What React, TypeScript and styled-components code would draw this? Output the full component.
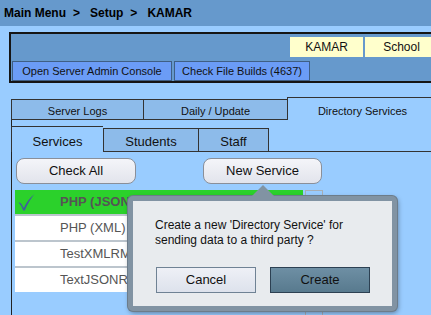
import styled, { createGlobalStyle } from "styled-components";

const GlobalStyle = createGlobalStyle`
  html, body {
    margin: 0;
    padding: 0;
    overflow: hidden;
  }
  body {
    background: #99ccff;
    font-family: "Liberation Sans", Arial, sans-serif;
    color: #111;
  }
`;

const Page = styled.div`
  position: relative;
  width: 431px;
  height: 315px;
  overflow: hidden;
`;

const Breadcrumb = styled.div`
  height: 26px;
  background: #6699cc;
  padding-left: 4px;
  display: flex;
  align-items: center;
  font-size: 12px;
  font-weight: bold;
  color: #000;
`;

const Crumb = styled.span`
  white-space: nowrap;
`;

const Separator = styled.span`
  margin: 0 10px 0 7px;
`;

const Toolbar = styled.div`
  margin: 6px 0 0 9px;
  width: 433px;
  box-sizing: border-box;
  background: #6699cc;
  border: 2px solid #151515;
  padding: 3px 2px 0 1px;
  display: flex;
  flex-direction: column;
  gap: 4px;
  height: 51px;
`;

const ToolRow = styled.div<{ $end?: boolean }>`
  display: flex;
  justify-content: ${(p) => (p.$end ? "flex-end" : "flex-start")};
  gap: 2px;
`;

const ContextTag = styled.div`
  width: 73px;
  height: 20px;
  background: #ffffcc;
  font-size: 12px;
  line-height: 21px;
  text-align: center;
`;

const ToolButton = styled.div<{ $w: number }>`
  width: ${(p) => p.$w}px;
  height: 20px;
  box-sizing: border-box;
  background: #6b9cf6;
  border: 1px solid #3f5f85;
  font-size: 11px;
  line-height: 19px;
  text-align: center;
  white-space: nowrap;
`;

const TopTabs = styled.div`
  margin: 14px 0 0 11px;
  display: flex;
  align-items: flex-end;
`;

const TopTab = styled.div<{ $w: number; $active?: boolean }>`
  width: ${(p) => p.$w}px;
  flex-shrink: 0;
  box-sizing: border-box;
  height: ${(p) => (p.$active ? 23 : 21)}px;
  padding-top: ${(p) => (p.$active ? 6 : 4)}px;
  line-height: 14px;
  font-size: 11px;
  text-align: center;
  border-top: 1px solid #333;
  border-left: 1px solid #333;
  border-bottom: ${(p) => (p.$active ? "none" : "1px solid #333")};
  background: ${(p) => (p.$active ? "transparent" : "#8dbbea")};
`;

const OuterBody = styled.div`
  margin-left: 11px;
  border-left: 1px solid #222;
  padding-top: 6px;
  height: 200px;
`;

const SubTabs = styled.div`
  margin-left: -1px;
  display: flex;
  align-items: flex-end;
`;

const SubTab = styled.div<{ $w: number; $active?: boolean; $last?: boolean }>`
  width: ${(p) => p.$w}px;
  flex-shrink: 0;
  box-sizing: border-box;
  height: ${(p) => (p.$active ? 26 : 24)}px;
  padding-top: ${(p) => (p.$active ? 5 : 3)}px;
  line-height: 19px;
  font-size: 13px;
  text-align: center;
  border-top: 1px solid #333;
  border-left: 1px solid #333;
  border-right: ${(p) => (p.$last ? "1px solid #333" : "none")};
  border-bottom: ${(p) => (p.$active ? "none" : "1px solid #333")};
  background: ${(p) => (p.$active ? "transparent" : "#8dbbea")};
`;

const TabLine = styled.div`
  flex: 1;
  border-bottom: 1px solid #333;
`;

const Panel = styled.div`
  padding: 6px 0 0 4px;
`;

const Actions = styled.div`
  display: flex;
  gap: 67px;
`;

const PillButton = styled.div<{ $w: number }>`
  position: relative;
  width: ${(p) => p.$w}px;
  height: 26px;
  box-sizing: border-box;
  border: 1px solid #8a8f99;
  border-radius: 8px;
  background: linear-gradient(#f4f5f9, #e2e4ec);
  font-size: 13px;
  line-height: 24px;
  text-align: center;
`;

const ListArea = styled.div`
  margin: 6px 0 0 -1px;
  display: flex;
  gap: 2px;
`;

const Rows = styled.div`
  width: 288px;
`;

const Row = styled.div<{ $selected?: boolean; $last?: boolean }>`
  position: relative;
  height: 24px;
  border-bottom: ${(p) => (p.$last ? "none" : "2px solid #bcc5cd")};
  background: ${(p) => (p.$selected ? "#2bd12b" : "#fff")};
  padding-left: 45px;
  font-size: 13px;
  line-height: 24px;
  color: #555;
  font-weight: ${(p) => (p.$selected ? "bold" : "normal")};
  white-space: nowrap;
`;

const Check = styled.svg`
  position: absolute;
  left: 3px;
  top: 3px;
`;

const ScrollTrack = styled.div`
  width: 18px;
  height: 130px;
  box-sizing: border-box;
  border: 1px solid #a6aeb6;
  border-bottom: none;
`;

const Popover = styled.div`
  position: absolute;
  left: 128px;
  top: 196px;
  width: 269px;
  height: 115px;
  box-sizing: border-box;
  border: 5px solid #8193a3;
  border-radius: 5px;
  background: #e8ebee;
  box-shadow: 0 0 0 1px #6c7c8a, 1px 2px 5px rgba(0, 0, 0, 0.4);
  padding: 17px 0 0 22px;

  &::before {
    content: "";
    position: absolute;
    left: 118px;
    top: -16px;
    border-left: 12px solid transparent;
    border-right: 12px solid transparent;
    border-bottom: 12px solid #8193a3;
  }
`;

const Message = styled.div`
  font-size: 12px;
  line-height: 15px;
  color: #111;
`;

const DialogButtons = styled.div`
  margin: 19px 0 0 1px;
  display: flex;
  gap: 14px;
`;

const DialogButton = styled.div<{ $primary?: boolean }>`
  width: 100px;
  height: 26px;
  box-sizing: border-box;
  border: 1px solid ${(p) => (p.$primary ? "#2c4052" : "#6f8294")};
  background: ${(p) =>
    p.$primary
      ? "linear-gradient(#6e8fa4, #587a8e)"
      : "linear-gradient(#eef0f6, #dde2ec)"};
  font-size: 13px;
  line-height: 24px;
  text-align: center;
  color: #111;
`;

const services = ["PHP (JSON)", "PHP (XML)", "TestXMLRMS", "TextJSONRMS"];

export default function App() {
  return (
    <Page>
      <GlobalStyle />
      <Breadcrumb>
        <Crumb>Main Menu</Crumb>
        <Separator>&gt;</Separator>
        <Crumb>Setup</Crumb>
        <Separator>&gt;</Separator>
        <Crumb>KAMAR</Crumb>
      </Breadcrumb>

      <Toolbar>
        <ToolRow $end>
          <ContextTag>KAMAR</ContextTag>
          <ContextTag>School</ContextTag>
        </ToolRow>
        <ToolRow>
          <ToolButton $w={160}>Open Server Admin Console</ToolButton>
          <ToolButton $w={136}>Check File Builds (4637)</ToolButton>
        </ToolRow>
      </Toolbar>

      <TopTabs>
        <TopTab $w={132}>Server Logs</TopTab>
        <TopTab $w={144}>Daily / Update</TopTab>
        <TopTab $w={150} $active>
          Directory Services
        </TopTab>
      </TopTabs>

      <OuterBody>
        <SubTabs>
          <SubTab $w={92} $active>
            Services
          </SubTab>
          <SubTab $w={95}>Students</SubTab>
          <SubTab $w={71} $last>
            Staff
          </SubTab>
          <TabLine />
        </SubTabs>

        <Panel>
          <Actions>
            <PillButton $w={120}>Check All</PillButton>
            <PillButton $w={119}>New Service</PillButton>
          </Actions>

          <ListArea>
            <Rows>
              {services.map((name, i) => (
                <Row
                  key={name}
                  $selected={i === 0}
                  $last={i === services.length - 1}
                >
                  {i === 0 && (
                    <Check width="17" height="18" viewBox="0 0 17 18">
                      <path
                        d="M0.5 9.5 Q2.5 9 3.5 11 L5.8 15 Q9.5 6.5 16.5 1 Q11 7.5 6.8 17.5 L5.2 17.5 Q3.5 12.5 0.5 9.5 Z"
                        fill="#3f5f9f"
                      />
                    </Check>
                  )}
                  {name}
                </Row>
              ))}
            </Rows>
            <ScrollTrack />
          </ListArea>
        </Panel>
      </OuterBody>

      <Popover>
        <Message>
          Create a new 'Directory Service' for
          <br />
          sending data to a third party ?
        </Message>
        <DialogButtons>
          <DialogButton>Cancel</DialogButton>
          <DialogButton $primary>Create</DialogButton>
        </DialogButtons>
      </Popover>
    </Page>
  );
}
